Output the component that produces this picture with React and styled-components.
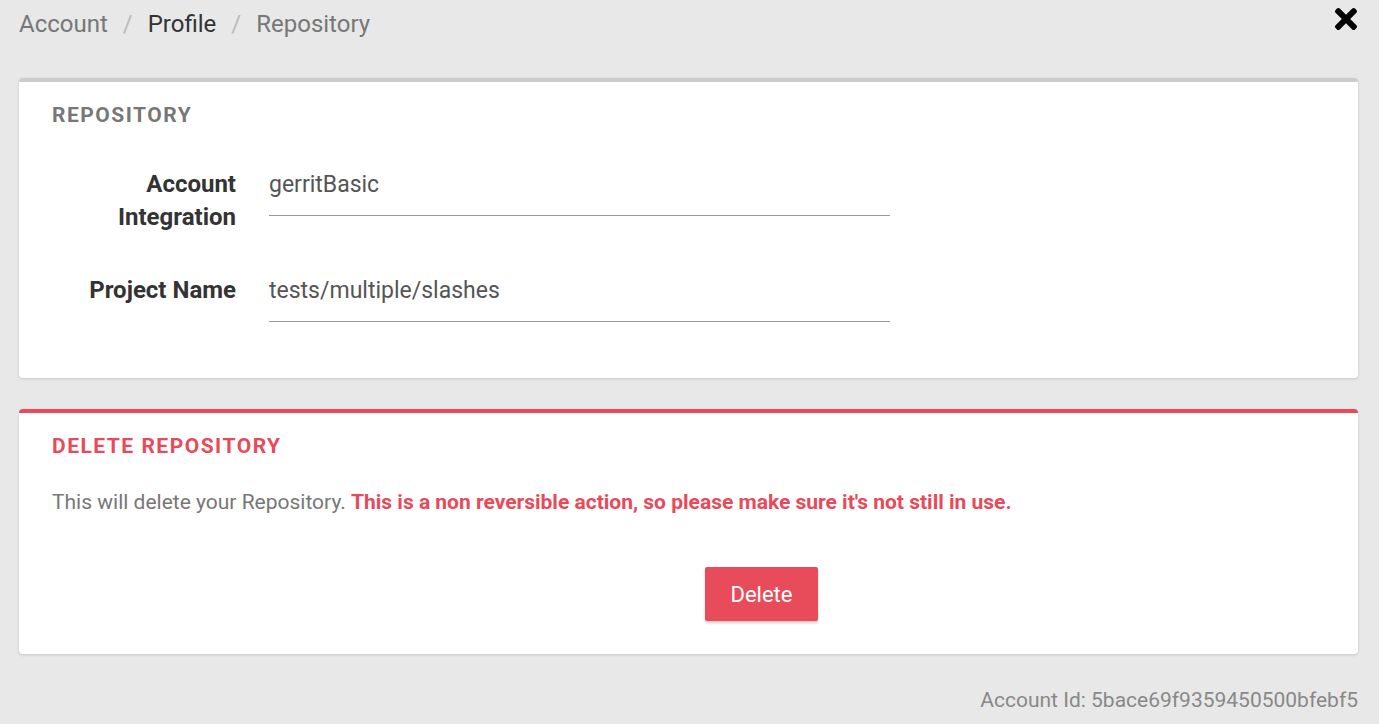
import styled, { createGlobalStyle } from 'styled-components';
import { FaTimes } from 'react-icons/fa';

const GlobalStyle = createGlobalStyle`
  html, body {
    margin: 0;
    padding: 0;
    background: #e8e8e8;
    font-family: Roboto, "Liberation Sans", sans-serif;
  }
`;

const Page = styled.div`
  padding: 0 21px 0 19px;
  min-height: 724px;
  box-sizing: border-box;
`;

const TopBar = styled.div`
  display: flex;
  justify-content: space-between;
  align-items: flex-start;
  height: 78px;
`;

const Crumbs = styled.nav`
  display: flex;
  align-items: center;
  gap: 15px;
  font-size: 24px;
  line-height: 48px;
  color: #777;
`;

const Crumb = styled.span`
  color: ${p => (p.$active ? '#333' : '#777')};
`;

const Sep = styled.span`
  color: #bbb;
`;

const Close = styled.button`
  border: 0;
  background: none;
  padding: 0;
  margin-top: 3px;
  margin-right: -4px;
  color: #000;
  cursor: pointer;
  display: flex;
`;

const Card = styled.section`
  background: #fff;
  border-top: 4px solid ${p => (p.$danger ? '#e84a5a' : '#cccccc')};
  border-radius: 4px;
  box-shadow: 0 1px 3px rgba(0, 0, 0, 0.15);
  padding: 19px 33px ${p => p.$pb || 30}px;
  margin-bottom: 31px;
`;

const CardTitle = styled.h2`
  margin: 0;
  font-size: 21px;
  font-weight: 700;
  letter-spacing: 1.5px;
  line-height: 28px;
  color: ${p => (p.$danger ? '#e84a5a' : '#777')};
`;

const Form = styled.div`
  display: grid;
  gap: 40px;
  margin-top: 39px;
`;

const Row = styled.div`
  display: grid;
  grid-template-columns: 184px 621px;
  column-gap: 33px;
  align-items: start;
`;

const Label = styled.label`
  text-align: right;
  font-size: 24px;
  font-weight: 700;
  line-height: 33px;
  color: #333;
`;

const Input = styled.input`
  border: 0;
  border-bottom: 1px solid #999;
  outline: none;
  padding: 0 0 14px;
  font-family: inherit;
  font-size: 23px;
  height: 48px;
  box-sizing: border-box;
  color: #555;
  background: transparent;
`;

const Text = styled.p`
  margin: 28px 0 0;
  font-size: 21px;
  line-height: 28px;
  color: #777;
`;

const Warn = styled.strong`
  color: #e84a5a;
`;

const Actions = styled.div`
  display: flex;
  padding-left: 653px;
  margin-top: 51px;
`;

const DangerButton = styled.button`
  background: #e84c5b;
  color: #fff;
  border: 0;
  border-radius: 2px;
  width: 113px;
  height: 54px;
  font-family: inherit;
  font-size: 22px;
  box-shadow: 0 2px 3px rgba(0, 0, 0, 0.2);
  cursor: pointer;
`;

const Footer = styled.div`
  text-align: right;
  font-size: 21px;
  color: #888;
  margin-top: 34px;
`;

export default function App() {
  return (
    <>
      <GlobalStyle />
      <Page>
        <TopBar>
          <Crumbs>
            <Crumb>Account</Crumb>
            <Sep>/</Sep>
            <Crumb $active>Profile</Crumb>
            <Sep>/</Sep>
            <Crumb>Repository</Crumb>
          </Crumbs>
          <Close aria-label="close">
            <FaTimes size={32} />
          </Close>
        </TopBar>

        <Card $pb={56}>
          <CardTitle>REPOSITORY</CardTitle>
          <Form>
            <Row>
              <Label>Account Integration</Label>
              <Input readOnly defaultValue="gerritBasic" />
            </Row>
            <Row>
              <Label>Project Name</Label>
              <Input readOnly defaultValue="tests/multiple/slashes" />
            </Row>
          </Form>
        </Card>

        <Card $danger $pb={33}>
          <CardTitle $danger>DELETE REPOSITORY</CardTitle>
          <Text>
            This will delete your Repository.{' '}
            <Warn>This is a non reversible action, so please make sure it's not still in use.</Warn>
          </Text>
          <Actions>
            <DangerButton>Delete</DangerButton>
          </Actions>
        </Card>

        <Footer>Account Id: 5bace69f9359450500bfebf5</Footer>
      </Page>
    </>
  );
}
